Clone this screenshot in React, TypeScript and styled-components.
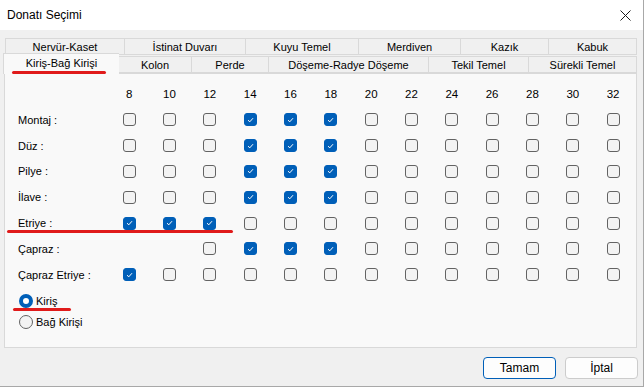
import React, { FC } from 'react';
import styled, { createGlobalStyle } from 'styled-components';

const GlobalStyle = createGlobalStyle`
    html, body {
        margin: 0;
        padding: 0;
        background: #ffffff;
    }
    body {
        font-family: 'Liberation Sans', Arial, sans-serif;
        font-size: 11px;
        color: #000;
    }
`;

const Window = styled.div`
    width: 643px;
    height: 386px;
    background: #f0f0f0;
    border-right: 1px solid #a8a8a8;
    border-bottom: 1px solid #a8a8a8;
    display: flex;
    flex-direction: column;
    position: relative;
    overflow: hidden;
`;

const TitleBar = styled.div`
    height: 30px;
    background: #ffffff;
    display: flex;
    align-items: center;
    justify-content: space-between;
    padding: 0 12px 0 7px;
    flex-shrink: 0;
`;

const Title = styled.span`
    font-size: 12px;
    line-height: 16px;
`;

const Body = styled.div`
    flex: 1;
    display: flex;
    flex-direction: column;
    padding: 8px 5px 0 4px;
`;

const TabRow = styled.div<{ $front?: boolean }>`
    display: flex;
    height: ${({ $front }) => ($front ? '18px' : '17px')};
    padding-left: 1px;
    align-items: flex-end;
    position: relative;
    z-index: ${({ $front }) => ($front ? 2 : 1)};
`;

const Tab = styled.div<{ $w: number; $active?: boolean }>`
    width: ${({ $w }) => $w}px;
    height: ${({ $active }) => ($active ? '21px' : '17px')};
    margin: ${({ $active }) => ($active ? '0 -1px -1px -2px' : '0')};
    box-sizing: border-box;
    border: 1px solid #d9d9d9;
    border-right: none;
    border-bottom: ${({ $active }) => ($active ? 'none' : '1px solid #d9d9d9')};
    background: ${({ $active }) => ($active ? '#f9f9f9' : '#f0f0f0')};
    display: flex;
    align-items: center;
    justify-content: center;
    font-size: 11px;
    line-height: 13px;
    padding-top: 1px;
    padding-bottom: ${({ $active }) => ($active ? '3px' : '0')};
    position: relative;
    z-index: ${({ $active }) => ($active ? 3 : 1)};
    white-space: nowrap;

    &:last-child {
        border-right: 1px solid #d9d9d9;
    }
`;

const Panel = styled.div`
    height: 275px;
    box-sizing: border-box;
    margin-right: 1px;
    border: 1px solid #d9d9d9;
    background: #f9f9f9;
    padding: 7px 0 0 13px;
    position: relative;
`;

const Grid = styled.div`
    display: grid;
    grid-template-columns: 91px repeat(13, 40.33px);
    grid-auto-rows: 25.83px;
    align-items: center;
`;

const HeaderCell = styled.div`
    text-align: center;
    font-size: 11.5px;
`;

const RowLabel = styled.div`
    font-size: 11px;
`;

const Cell = styled.div`
    display: flex;
    justify-content: center;
    align-items: center;
`;

const Box = styled.span<{ $checked?: boolean }>`
    width: 13px;
    height: 13px;
    box-sizing: border-box;
    border-radius: 3px;
    border: 1px solid ${({ $checked }) => ($checked ? '#005fb8' : '#636363')};
    background: ${({ $checked }) => ($checked ? '#005fb8' : '#f3f3f3')};
    display: flex;
    align-items: center;
    justify-content: center;
`;

const RadioGroup = styled.div`
    display: flex;
    flex-direction: column;
    gap: 4px;
    margin-top: 5px;
    padding-left: 1px;
`;

const RadioRow = styled.div`
    display: flex;
    align-items: center;
    gap: 3px;
    height: 17px;
    font-size: 11px;
`;

const RadioDot = styled.span<{ $on?: boolean }>`
    width: 14px;
    height: 14px;
    box-sizing: border-box;
    border-radius: 50%;
    border: ${({ $on }) => ($on ? '4px solid #005fb8' : '1px solid #636363')};
    background: ${({ $on }) => ($on ? '#ffffff' : '#f3f3f3')};
`;

const Footer = styled.div`
    display: flex;
    justify-content: flex-end;
    gap: 9px;
    padding: 9px 0 0 0;
`;

const Button = styled.button<{ $primary?: boolean }>`
    width: 73px;
    height: 22px;
    box-sizing: border-box;
    border-radius: 4px;
    border: 1px solid ${({ $primary }) => ($primary ? '#005fb8' : '#cccccc')};
    background: #fdfdfd;
    font-family: 'Liberation Sans', Arial, sans-serif;
    font-size: 12px;
    color: #000;
    padding: 0;
`;

const Mark = styled.div<{ $left: number; $top: number; $w: number }>`
    position: absolute;
    left: ${({ $left }) => $left}px;
    top: ${({ $top }) => $top}px;
    width: ${({ $w }) => $w}px;
    height: 3px;
    border-radius: 2px;
    background: #e01b1b;
    z-index: 10;
`;

const CheckGlyph: FC = () => (
    <svg width="7" height="6" viewBox="0 0 7 6">
        <path d="M1 3.2 L2.8 4.8 L6 1.2" fill="none" stroke="#ffffff" strokeWidth="1" />
    </svg>
);

const Check: FC<{ on?: boolean }> = ({ on }) => (
    <Box $checked={on}>{on && <CheckGlyph />}</Box>
);

const CloseIcon: FC = () => (
    <svg width="11" height="11" viewBox="0 0 11 11">
        <path d="M0.5 0.5 L10.5 10.5 M10.5 0.5 L0.5 10.5" stroke="#1a1a1a" strokeWidth="1" />
    </svg>
);

const backTabs = [
    { t: 'Nervür-Kaset', w: 119 },
    { t: 'İstinat Duvarı', w: 121 },
    { t: 'Kuyu Temel', w: 113 },
    { t: 'Merdiven', w: 102 },
    { t: 'Kazık', w: 88 },
    { t: 'Kabuk', w: 89 },
];

const frontTabs = [
    { t: 'Kiriş-Bağ Kirişi', w: 116, active: true },
    { t: 'Kolon', w: 73 },
    { t: 'Perde', w: 77 },
    { t: 'Döşeme-Radye Döşeme', w: 160 },
    { t: 'Tekil Temel', w: 100 },
    { t: 'Sürekli Temel', w: 109 },
];

const sizes = [8, 10, 12, 14, 16, 18, 20, 22, 24, 26, 28, 30, 32];

// -1 = yok, 0 = boş, 1 = seçili
const mid = [0, 0, 0, 1, 1, 1, 0, 0, 0, 0, 0, 0, 0];
const rows: { label: string; v: number[] }[] = [
    { label: 'Montaj :', v: mid },
    { label: 'Düz :', v: mid },
    { label: 'Pilye :', v: mid },
    { label: 'İlave :', v: mid },
    { label: 'Etriye :', v: [1, 1, 1, 0, 0, 0, 0, 0, 0, 0, 0, 0, 0] },
    { label: 'Çapraz :', v: [-1, -1, 0, 1, 1, 1, 0, 0, 0, 0, 0, 0, 0] },
    { label: 'Çapraz Etriye :', v: [1, 0, 0, 0, 0, 0, 0, 0, 0, 0, 0, 0, 0] },
];

const App: FC = () => {
    return (
        <>
            <GlobalStyle />
            <Window>
                <TitleBar>
                    <Title>Donatı Seçimi</Title>
                    <CloseIcon />
                </TitleBar>
                <Body>
                    <TabRow>
                        {backTabs.map((tab) => (
                            <Tab key={tab.t} $w={tab.w}>{tab.t}</Tab>
                        ))}
                    </TabRow>
                    <TabRow $front>
                        {frontTabs.map((tab) => (
                            <Tab key={tab.t} $w={tab.w} $active={tab.active}>{tab.t}</Tab>
                        ))}
                    </TabRow>
                    <Panel>
                        <Grid>
                            <div />
                            {sizes.map((s) => (
                                <HeaderCell key={s}>{s}</HeaderCell>
                            ))}
                            {rows.map((r) => (
                                <React.Fragment key={r.label}>
                                    <RowLabel>{r.label}</RowLabel>
                                    {r.v.map((v, i) => (
                                        <Cell key={i}>{v >= 0 && <Check on={v === 1} />}</Cell>
                                    ))}
                                </React.Fragment>
                            ))}
                        </Grid>
                        <RadioGroup>
                            <RadioRow>
                                <RadioDot $on />
                                <span>Kiriş</span>
                            </RadioRow>
                            <RadioRow>
                                <RadioDot />
                                <span>Bağ Kirişi</span>
                            </RadioRow>
                        </RadioGroup>
                    </Panel>
                    <Footer>
                        <Button $primary>Tamam</Button>
                        <Button>İptal</Button>
                    </Footer>
                </Body>
                <Mark $left={12} $top={71} $w={94} />
                <Mark $left={7} $top={230} $w={226} />
                <Mark $left={13} $top={308} $w={58} />
            </Window>
        </>
    );
};

export default App;
